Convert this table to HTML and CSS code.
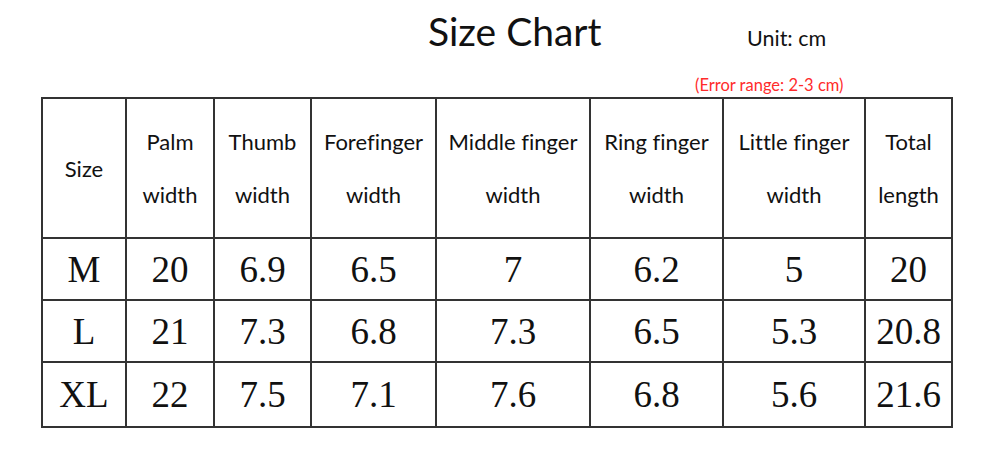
FILE: index.html
```html
<!DOCTYPE html>
<html>
<head>
<meta charset="utf-8">
<link rel="stylesheet" href="styles.css">
</head>
<body>
<div class="page">
  <div class="top">
    <h1 class="title">Size Chart</h1>
    <span class="unit">Unit: cm</span>
  </div>
  <div class="note">(Error range: 2-3 cm)</div>
  <table class="chart">
    <colgroup>
      <col class="c1"><col class="c2"><col class="c3"><col class="c4"><col class="c5"><col class="c6"><col class="c7"><col class="c8">
    </colgroup>
    <thead>
      <tr>
        <th>Size</th>
        <th>Palm<br>width</th>
        <th>Thumb<br>width</th>
        <th>Forefinger<br>width</th>
        <th>Middle finger<br>width</th>
        <th>Ring finger<br>width</th>
        <th>Little finger<br>width</th>
        <th>Total<br>length</th>
      </tr>
    </thead>
    <tbody>
      <tr class="r1"><td>M</td><td>20</td><td>6.9</td><td>6.5</td><td>7</td><td>6.2</td><td>5</td><td>20</td></tr>
      <tr class="r2"><td>L</td><td>21</td><td>7.3</td><td>6.8</td><td>7.3</td><td>6.5</td><td>5.3</td><td>20.8</td></tr>
      <tr class="r3"><td>XL</td><td>22</td><td>7.5</td><td>7.1</td><td>7.6</td><td>6.8</td><td>5.6</td><td>21.6</td></tr>
    </tbody>
  </table>
</div>
</body>
</html>
```
FILE: styles.css
```css
html, body {
  margin: 0;
  padding: 0;
  background: #ffffff;
}
.page {
  width: 1000px;
  height: 460px;
  font-family: "Lato", "Open Sans", sans-serif;
  font-variant-ligatures: none;
  color: #111;
}
.top {
  display: flex;
  align-items: baseline;
  padding-left: 428px;
  height: 62px;
}
.title {
  margin: 0;
  width: 319px;
  font-weight: 400;
  font-size: 39px;
  line-height: 62px;
  color: #111;
}
.unit {
  font-size: 21.5px;
}
.note {
  padding-left: 695px;
  padding-top: 12px;
  font-size: 16.5px;
  line-height: 22px;
  height: 23px;
  color: #ff2b2b;
}
.chart {
  margin-left: 41px;
  border-collapse: collapse;
  table-layout: fixed;
  width: 912px;
}
.chart th, .chart td {
  border: 2px solid #333;
  text-align: center;
  vertical-align: middle;
  padding: 0;
}
.chart th {
  font-weight: 400;
  font-size: 22px;
  line-height: 53px;
  height: 138px;
}
.chart td {
  font-family: "Liberation Serif", "Times New Roman", serif;
  font-size: 37px;
  color: #111;
}
.r1 td { height: 60px; }
.r2 td { height: 60px; }
.r3 td { height: 63px; }
.c1 { width: 84px; }
.c2 { width: 88px; }
.c3 { width: 97px; }
.c4 { width: 125px; }
.c5 { width: 154px; }
.c6 { width: 133px; }
.c7 { width: 142px; }
.c8 { width: 87px; }
```
